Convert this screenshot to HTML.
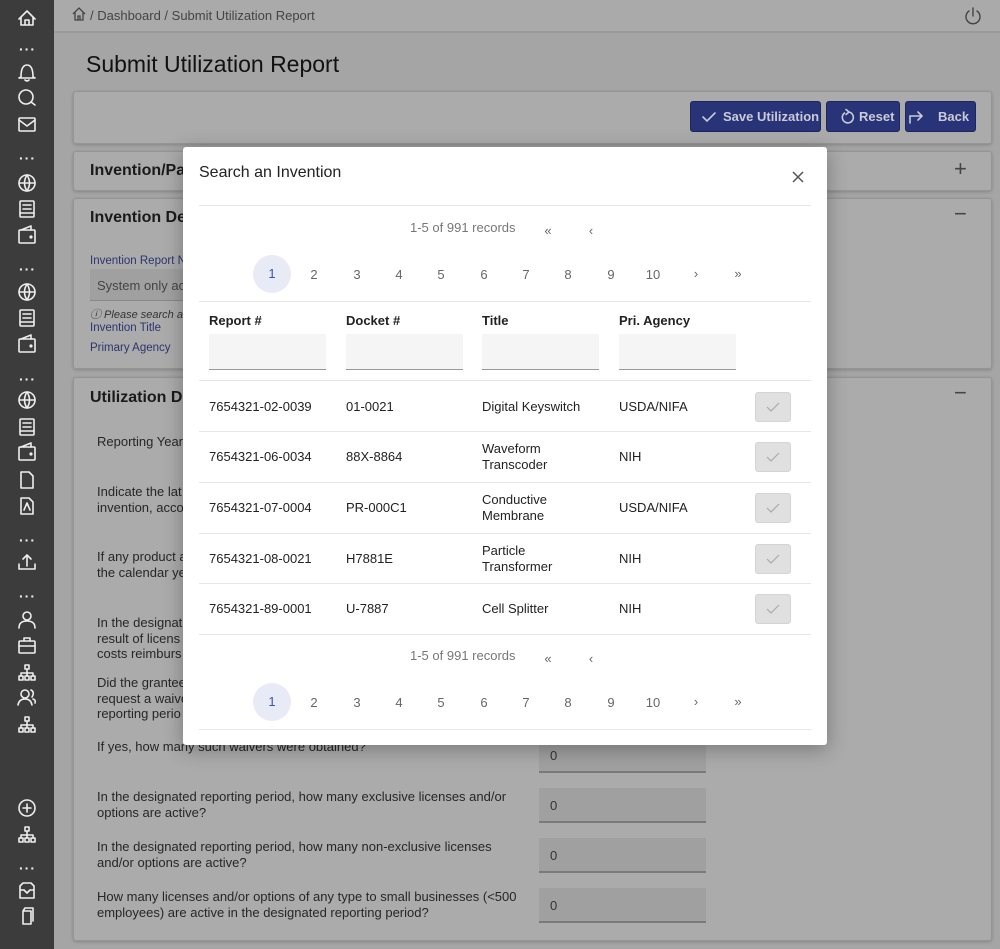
<!DOCTYPE html>
<html><head><meta charset="utf-8"><style>
*{box-sizing:border-box;margin:0;padding:0}
html,body{width:1000px;height:949px;overflow:hidden}
body{background:#a5a5a5;font-family:"Liberation Sans",Roboto,sans-serif;position:relative;color:#1a1a1a}
.side{position:absolute;left:0;top:0;width:54px;height:949px;background:#3c3c3c}
.dots{position:absolute;left:19px;color:#eee;font-size:14px;font-weight:bold;letter-spacing:1px;line-height:6px}
.abs{position:absolute}
.card{position:absolute;left:73px;width:919px;background:#ababab;border:1px solid #959595;border-radius:3px;box-shadow:0 1px 3px rgba(0,0,0,.2)}
.btn{position:absolute;top:101px;height:31px;background:#283378;border:1px solid #1d265e;border-radius:3px;color:#c9cbd6;font-size:13px;font-weight:bold;line-height:29px;padding-left:32px;white-space:nowrap}
.lbl{position:absolute;left:97px;font-size:13px;color:#262626;line-height:15.5px;width:420px}
.inp{position:absolute;left:539px;width:167px;height:35px;background:#a0a0a0;border-bottom:2px solid #7a7a7a;font-size:13px;color:#333;padding:10px 0 0 11px}
.modal{position:absolute;left:183px;top:147px;width:644px;height:598px;background:#fff;border-radius:3px;box-shadow:0 4px 20px rgba(0,0,0,.3)}
.sep{position:absolute;left:16px;width:612px;height:1px;background:#e6e6e6}
.pg{position:absolute;font-size:13px;color:#666;width:40px;text-align:center}
.cur{position:absolute;width:38px;height:38px;border-radius:50%;background:#e8eaf6;color:#3f51b5;font-size:13px;text-align:center;line-height:38px}
.th{position:absolute;top:166px;font-size:13px;font-weight:bold;color:#222}
.fi{position:absolute;top:187px;width:117px;height:36px;background:#f5f5f5;border-bottom:1px solid #999}
.td{position:absolute;font-size:13px;color:#222;line-height:15.5px}
.chk{position:absolute;left:572px;width:36px;height:30px;background:#e0e0e0;border:1px solid #d4d4d4;border-radius:3px}
</style></head><body>
<div class="side">
<svg width="54" height="949" fill="none" stroke="#eee" stroke-width="1.6" stroke-linecap="round" stroke-linejoin="round">
<path d="M19 19 L27 11 L35 19 M21 17 V25 H33 V17 M25 25 V20 H29 V25"/>
<path d="M21 77 Q21 65 27 65 Q33 65 33 77 L35 78 H19 Z M25 80 Q27 82 29 80"/>
<circle cx="26" cy="97" r="7"/><path d="M31 102 L35 105"/>
<rect x="19" y="118" width="16" height="13" rx="1"/><path d="M19 120 L27 126 L35 120"/>
<circle cx="27" cy="183" r="8"/><path d="M19 183 H35 M27 175 Q22 183 27 191 Q32 183 27 175"/>
<rect x="20" y="201" width="14" height="16" rx="1"/><path d="M23 205 H31 M23 209 H31 M20 213 H34"/>
<rect x="19" y="230" width="16" height="13" rx="1"/><path d="M21 230 L31 226 V230"/><circle cx="31" cy="237" r=".8"/>
<circle cx="27" cy="292" r="8"/><path d="M19 292 H35 M27 284 Q22 292 27 300 Q32 292 27 284"/>
<rect x="20" y="310" width="14" height="16" rx="1"/><path d="M23 314 H31 M23 318 H31 M20 322 H34"/>
<rect x="19" y="339" width="16" height="13" rx="1"/><path d="M21 339 L31 335 V339"/><circle cx="31" cy="346" r=".8"/>
<circle cx="27" cy="400" r="8"/><path d="M19 400 H35 M27 392 Q22 400 27 408 Q32 400 27 392"/>
<rect x="20" y="419" width="14" height="16" rx="1"/><path d="M23 423 H31 M23 427 H31 M20 431 H34"/>
<rect x="19" y="447" width="16" height="13" rx="1"/><path d="M21 447 L31 443 V447"/><circle cx="31" cy="454" r=".8"/>
<path d="M21 472 H29 L33 476 V488 H21 Z"/>
<path d="M21 498 H29 L33 502 V514 H21 Z M24 510 L27 503 L30 510"/>
<path d="M27 566 V555 M23 559 L27 555 L31 559 M19 564 V569 H35 V564"/>
<circle cx="27" cy="616" r="4"/><path d="M19 628 Q19 621 27 621 Q35 621 35 628"/>
<rect x="19" y="641" width="16" height="12" rx="1"/><path d="M24 641 V638 H30 V641 M19 646 H35"/>
<rect x="25" y="665" width="4" height="4"/><rect x="19" y="676" width="4" height="4"/><rect x="25" y="676" width="4" height="4"/><rect x="31" y="676" width="4" height="4"/><path d="M27 669 V676 M21 676 V673 H33 V676"/>
<circle cx="25" cy="694" r="4"/><path d="M18 705 Q19 699 25 699 Q31 699 32 705 M31 690 Q35 692 32 697 M35 703 Q36 700 33 699"/>
<rect x="25" y="717" width="4" height="4"/><rect x="19" y="728" width="4" height="4"/><rect x="25" y="728" width="4" height="4"/><rect x="31" y="728" width="4" height="4"/><path d="M27 721 V728 M21 728 V725 H33 V728"/>
<circle cx="27" cy="808" r="8"/><path d="M27 804 V812 M23 808 H31"/>
<rect x="25" y="827" width="4" height="4"/><rect x="19" y="838" width="4" height="4"/><rect x="25" y="838" width="4" height="4"/><rect x="31" y="838" width="4" height="4"/><path d="M27 831 V838 M21 838 V835 H33 V838"/>
<path d="M20 886 L23 883 H31 L34 886 V898 H20 Z M20 890 H24 L27 893 L30 890 H34"/>
<path d="M23 911 H31 V924 H23 Z M23 911 L25 908 H33 V921"/>
</svg>
<div class="dots" style="top:46px">···</div><div class="dots" style="top:155px">···</div><div class="dots" style="top:266px">···</div><div class="dots" style="top:376px">···</div><div class="dots" style="top:537px">···</div><div class="dots" style="top:593px">···</div><div class="dots" style="top:865px">···</div>
</div>
<div class="abs" style="left:54px;top:0;width:946px;height:33px;background:#aaa;border-bottom:2px solid #9a9a9a"></div>
<svg class="abs" style="left:72px;top:7px" width="14" height="14" fill="none" stroke="#444" stroke-width="1.3"><path d="M1 7 L7 1 L13 7 M3 5 V13 H11 V5 M6 13 V9 H8 V13"/></svg>
<div class="abs" style="left:90px;top:8px;font-size:13px;color:#444">/ Dashboard / Submit Utilization Report</div>
<svg class="abs" style="left:963px;top:6px" width="20" height="20" fill="none" stroke="#444" stroke-width="1.4" stroke-linecap="round"><path d="M6 5 A7 7 0 1 0 14 5 M10 2 V10"/></svg>
<div class="abs" style="left:86px;top:51px;font-size:23px;color:#111">Submit Utilization Report</div>
<div class="card" style="top:91px;height:53px"></div>
<div class="btn" style="left:690px;width:131px">Save Utilization</div>
<div class="btn" style="left:826px;width:74px">Reset</div>
<div class="btn" style="left:905px;width:71px">Back</div>
<svg class="abs" style="left:700px;top:107px" width="290" height="20" fill="none" stroke="#c9cbd6" stroke-width="1.6" stroke-linecap="round"><path d="M3 10 L7 14 L15 6"/><path d="M144.5 6 A5.5 5.5 0 1 0 149 5 M146 2.5 L149 5 L146 7.5"/><path d="M210 16 V9 H222 M218 5 L222 9 L218 13"/></svg>
<div class="card" style="top:151px;height:40px"><div class="abs" style="left:16px;top:10px;font-size:16px;font-weight:bold">Invention/Pat</div><div class="abs" style="left:880px;top:4px;font-size:22px;color:#444">+</div></div>
<div class="card" style="top:198px;height:171px"><div class="abs" style="left:16px;top:10px;font-size:16px;font-weight:bold">Invention Det</div><div class="abs" style="left:880px;top:2px;font-size:22px;color:#444">−</div>
<div class="abs" style="left:16px;top:56px;font-size:11.5px;color:#2b3470">Invention Report Nu</div>
<div class="abs" style="left:16px;top:70px;width:110px;height:32px;background:#a0a0a0;border-bottom:1px solid #888;font-size:13px;color:#444;padding:9px 7px">System only ac</div>
<div class="abs" style="left:16px;top:107px;font-size:11px;color:#333;font-style:italic">ⓘ Please search a</div>
<div class="abs" style="left:16px;top:123px;font-size:11.5px;color:#2b3470">Invention Title</div>
<div class="abs" style="left:16px;top:143px;font-size:11.5px;color:#2b3470">Primary Agency</div></div>
<div class="card" style="top:377px;height:564px"><div class="abs" style="left:16px;top:11px;font-size:16px;font-weight:bold">Utilization De</div><div class="abs" style="left:880px;top:2px;font-size:22px;color:#444">−</div></div>
<div class="lbl" style="top:434px">Reporting Year</div>
<div class="lbl" style="top:484px">Indicate the lat<br>invention, acco</div>
<div class="lbl" style="top:549px">If any product a<br>the calendar ye</div>
<div class="lbl" style="top:615px">In the designat<br>result of licens<br>costs reimburs</div>
<div class="lbl" style="top:675px">Did the grantee<br>request a waive<br>reporting perio</div>
<div class="lbl" style="top:739px">If yes, how many such waivers were obtained?</div>
<div class="lbl" style="top:789px">In the designated reporting period, how many exclusive licenses and/or options are active?</div>
<div class="lbl" style="top:839px">In the designated reporting period, how many non-exclusive licenses and/or options are active?</div>
<div class="lbl" style="top:889px">How many licenses and/or options of any type to small businesses (&lt;500 employees) are active in the designated reporting period?</div>
<div class="inp" style="top:738px">0</div><div class="inp" style="top:788px">0</div><div class="inp" style="top:838px">0</div><div class="inp" style="top:888px">0</div>

<div class="modal">
<div class="abs" style="left:16px;top:17px;font-size:16px;color:#222">Search an Invention</div>
<svg class="abs" style="left:608px;top:23px" width="14" height="14" stroke="#555" stroke-width="1.5"><path d="M2 2 L12 12 M12 2 L2 12"/></svg>
<div class="sep" style="top:58px"></div>
<div class="abs" style="left:227px;top:73px;font-size:13px;color:#777">1-5 of 991 records</div>
<div class="pg" style="left:345px;top:76px">«</div><div class="pg" style="left:388px;top:76px">‹</div>
<div class="cur" style="left:70px;top:108px">1</div>
<div class="pg" style="left:111px;top:120px">2</div><div class="pg" style="left:154px;top:120px">3</div><div class="pg" style="left:196px;top:120px">4</div><div class="pg" style="left:238px;top:120px">5</div><div class="pg" style="left:281px;top:120px">6</div><div class="pg" style="left:323px;top:120px">7</div><div class="pg" style="left:365px;top:120px">8</div><div class="pg" style="left:408px;top:120px">9</div><div class="pg" style="left:450px;top:120px">10</div><div class="pg" style="left:493px;top:119px">›</div><div class="pg" style="left:535px;top:119px">»</div>
<div class="sep" style="top:154px"></div>
<div class="th" style="left:26px">Report #</div><div class="th" style="left:163px">Docket #</div><div class="th" style="left:299px">Title</div><div class="th" style="left:436px">Pri. Agency</div>
<div class="fi" style="left:26px"></div><div class="fi" style="left:163px"></div><div class="fi" style="left:299px"></div><div class="fi" style="left:436px"></div>
<div class="sep" style="top:233px"></div>
<div class="td" style="left:26px;top:252px">7654321-02-0039</div><div class="td" style="left:163px;top:252px">01-0021</div><div class="td" style="left:299px;top:252px">Digital Keyswitch</div><div class="td" style="left:436px;top:252px">USDA/NIFA</div><div class="chk" style="top:245px"></div>
<div class="sep" style="top:284px"></div>
<div class="td" style="left:26px;top:302px">7654321-06-0034</div><div class="td" style="left:163px;top:302px">88X-8864</div><div class="td" style="left:299px;top:294px">Waveform<br>Transcoder</div><div class="td" style="left:436px;top:302px">NIH</div><div class="chk" style="top:295px"></div>
<div class="sep" style="top:335px"></div>
<div class="td" style="left:26px;top:353px">7654321-07-0004</div><div class="td" style="left:163px;top:353px">PR-000C1</div><div class="td" style="left:299px;top:345px">Conductive<br>Membrane</div><div class="td" style="left:436px;top:353px">USDA/NIFA</div><div class="chk" style="top:346px"></div>
<div class="sep" style="top:386px"></div>
<div class="td" style="left:26px;top:404px">7654321-08-0021</div><div class="td" style="left:163px;top:404px">H7881E</div><div class="td" style="left:299px;top:396px">Particle<br>Transformer</div><div class="td" style="left:436px;top:404px">NIH</div><div class="chk" style="top:397px"></div>
<div class="sep" style="top:436px"></div>
<div class="td" style="left:26px;top:454px">7654321-89-0001</div><div class="td" style="left:163px;top:454px">U-7887</div><div class="td" style="left:299px;top:454px">Cell Splitter</div><div class="td" style="left:436px;top:454px">NIH</div><div class="chk" style="top:447px"></div>
<svg class="abs" style="left:572px;top:245px" width="36" height="240" fill="none" stroke="#aaa" stroke-width="1.2"><path d="M12 15 L16 19 L24 11 M12 65 L16 69 L24 61 M12 116 L16 120 L24 112 M12 167 L16 171 L24 163 M12 217 L16 221 L24 213"/></svg>
<div class="sep" style="top:487px"></div>
<div class="abs" style="left:227px;top:501px;font-size:13px;color:#777">1-5 of 991 records</div>
<div class="pg" style="left:345px;top:504px">«</div><div class="pg" style="left:388px;top:504px">‹</div>
<div class="cur" style="left:70px;top:536px">1</div>
<div class="pg" style="left:111px;top:548px">2</div><div class="pg" style="left:154px;top:548px">3</div><div class="pg" style="left:196px;top:548px">4</div><div class="pg" style="left:238px;top:548px">5</div><div class="pg" style="left:281px;top:548px">6</div><div class="pg" style="left:323px;top:548px">7</div><div class="pg" style="left:365px;top:548px">8</div><div class="pg" style="left:408px;top:548px">9</div><div class="pg" style="left:450px;top:548px">10</div><div class="pg" style="left:493px;top:547px">›</div><div class="pg" style="left:535px;top:547px">»</div>
<div class="sep" style="top:582px"></div>
</div>
</body></html>
